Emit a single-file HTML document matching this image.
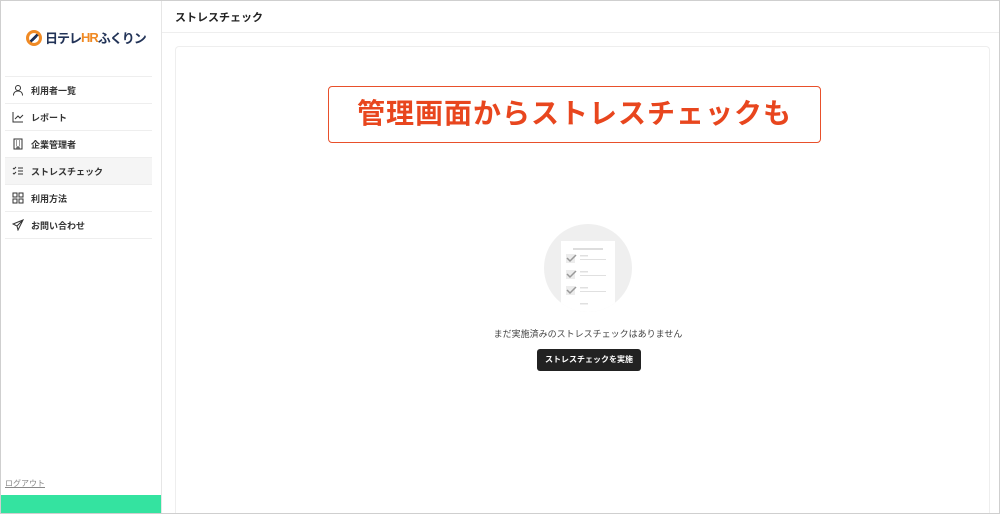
<!DOCTYPE html>
<html><head><meta charset="utf-8"><style>
*{margin:0;padding:0;box-sizing:border-box}
html,body{width:1000px;height:514px;overflow:hidden}
body{background:#fff;font-family:"Liberation Sans","Noto Sans CJK JP",sans-serif;position:relative;color:#222}
.frame{position:absolute;inset:0;border:1px solid #cfcfcf}
.side{position:absolute;left:0;top:0;width:162px;height:514px;border-right:1px solid #e6e6e6}
.logo{position:absolute;left:26px;top:28px;font-weight:bold;font-size:13px;color:#223357;display:flex;align-items:center;letter-spacing:-1px;white-space:nowrap}
.logo .c{width:16px;height:16px;border-radius:50%;border:3px solid #f08a24;margin-right:3px;flex:none;background:linear-gradient(135deg,transparent 40%,#223357 40%,#223357 60%,transparent 60%)}
.nav{position:absolute;left:5px;top:76px;width:147px;border-top:1px solid #eee}
.nav div{height:27px;border-bottom:1px solid #eee;display:flex;align-items:center;font-size:9px;font-weight:bold;color:#333;padding-left:7px}
.nav div.a{background:#f5f5f5}
.nav svg{width:12px;height:12px;margin-right:7px}
.logout{position:absolute;left:5px;top:478px;font-size:8px;color:#888;text-decoration:underline}
.green{position:absolute;left:0;top:495px;width:161px;height:19px;background:#34e3a0}
.hdr{position:absolute;left:162px;top:0;right:0;height:33px;border-bottom:1px solid #eee;font-size:11px;font-weight:bold;padding:9px 0 0 13px}
.card{position:absolute;left:175px;top:46px;width:815px;height:468px;border:1px solid #eee;border-bottom:none;border-radius:4px 4px 0 0}
.callout{position:absolute;left:328px;top:86px;width:493px;height:57px;border:1.5px solid #e8502b;border-radius:4px;color:#e8461e;font-size:28px;font-weight:bold;text-align:center;line-height:54px;letter-spacing:1px}
.circ{position:absolute;left:544px;top:224px;width:88px;height:88px;border-radius:50%;background:#efefef;overflow:hidden}
.msg{position:absolute;left:0;width:1176px;top:327px;text-align:center;font-size:9px;color:#444}
.btn{position:absolute;left:537px;top:349px;width:104px;height:22px;background:#222;border-radius:3px;color:#fff;font-size:8px;font-weight:bold;text-align:center;line-height:22px}
</style></head><body>
<div class="side">
<div class="logo"><span class="c"></span>日テレ<span style="color:#f08a24">HR</span>ふくりン</div>
<div class="nav">
<div><svg viewBox="0 0 12 12" fill="none" stroke="#333" stroke-width="1"><circle cx="6" cy="4" r="2.5"/><path d="M1.5 11.5c0-3 2-4.5 4.5-4.5s4.5 1.5 4.5 4.5"/></svg>利用者一覧</div>
<div><svg viewBox="0 0 12 12" fill="none" stroke="#333" stroke-width="1"><path d="M1 1v10h10M3 8l3-3 2 2 3-3"/></svg>レポート</div>
<div><svg viewBox="0 0 12 12" fill="none" stroke="#333" stroke-width="1"><rect x="2" y="1" width="8" height="10"/><path d="M4 3h1M7 3h1M4 5h1M7 5h1M4 7h1M7 7h1M5 11V9h2v2"/></svg>企業管理者</div>
<div class="a"><svg viewBox="0 0 12 12" fill="none" stroke="#333" stroke-width="1"><path d="M1 3l1 1 2-2M1 8l1 1 2-2M6 3h5M6 6h5M6 9h5"/></svg>ストレスチェック</div>
<div><svg viewBox="0 0 12 12" fill="none" stroke="#333" stroke-width="1"><rect x="1" y="1" width="4" height="4"/><rect x="7" y="1" width="4" height="4"/><rect x="1" y="7" width="4" height="4"/><rect x="7" y="7" width="4" height="4"/></svg>利用方法</div>
<div><svg viewBox="0 0 12 12" fill="none" stroke="#333" stroke-width="1"><path d="M11 1L1 5l4 2 1 4 5-10zM5 7l6-6"/></svg>お問い合わせ</div>
</div>
<div class="logout">ログアウト</div>
<div class="green"></div>
</div>
<div class="hdr">ストレスチェック</div>
<div class="card"></div>
<div class="callout">管理画面からストレスチェックも</div>
<div class="circ"><svg width="88" height="88" viewBox="0 0 88 88"><rect x="17" y="17" width="54" height="80" fill="#fff"/><rect x="29" y="24" width="30" height="2" fill="#ddd"/><g fill="#ececec"><rect x="22" y="30" width="9" height="9"/><rect x="22" y="46" width="9" height="9"/><rect x="22" y="62" width="9" height="9"/></g><g fill="none" stroke="#999" stroke-width="1.5"><path d="M23 34l3 3 6-6M23 50l3 3 6-6M23 66l3 3 6-6"/></g><g fill="#e0e0e0"><rect x="36" y="31" width="8" height="1.5"/><rect x="36" y="35" width="26" height="1"/><rect x="36" y="47" width="8" height="1.5"/><rect x="36" y="51" width="26" height="1"/><rect x="36" y="63" width="8" height="1.5"/><rect x="36" y="67" width="26" height="1"/><rect x="36" y="79" width="8" height="1.5"/></g></svg></div>
<div class="msg">まだ実施済みのストレスチェックはありません</div>
<div class="btn">ストレスチェックを実施</div>
<div class="frame"></div>
</body></html>
